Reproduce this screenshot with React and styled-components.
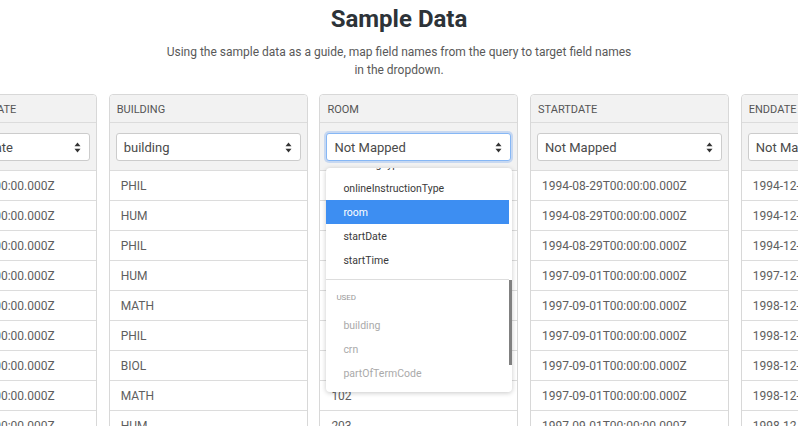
import styled, { createGlobalStyle } from 'styled-components';

const GlobalStyle = createGlobalStyle`
    body {
        margin: 0;
        background: #fff;
        font-family: Roboto, 'Liberation Sans', sans-serif;
        overflow: hidden;
    }
`;

const columns = [
    {
        name: 'OFFERINGSTARTDATE',
        value: 'offeringStartDate',
        rows: [
            '1994-08-29T00:00:00.000Z',
            '1994-08-29T00:00:00.000Z',
            '1994-08-29T00:00:00.000Z',
            '1997-09-01T00:00:00.000Z',
            '1997-09-01T00:00:00.000Z',
            '1997-09-01T00:00:00.000Z',
            '1997-09-01T00:00:00.000Z',
            '1997-09-01T00:00:00.000Z',
            '1997-09-01T00:00:00.000Z',
        ],
    },
    {
        name: 'BUILDING',
        value: 'building',
        rows: ['PHIL', 'HUM', 'PHIL', 'HUM', 'MATH', 'PHIL', 'BIOL', 'MATH', 'HUM'],
    },
    {
        name: 'ROOM',
        value: 'Not Mapped',
        focused: true,
        rows: ['104', '201', '104', '201', '102', '104', '120', '102', '203'],
    },
    {
        name: 'STARTDATE',
        value: 'Not Mapped',
        rows: [
            '1994-08-29T00:00:00.000Z',
            '1994-08-29T00:00:00.000Z',
            '1994-08-29T00:00:00.000Z',
            '1997-09-01T00:00:00.000Z',
            '1997-09-01T00:00:00.000Z',
            '1997-09-01T00:00:00.000Z',
            '1997-09-01T00:00:00.000Z',
            '1997-09-01T00:00:00.000Z',
            '1997-09-01T00:00:00.000Z',
        ],
    },
    {
        name: 'ENDDATE',
        value: 'Not Mapped',
        rows: [
            '1994-12-16T00:00:00.000Z',
            '1994-12-16T00:00:00.000Z',
            '1994-12-16T00:00:00.000Z',
            '1997-12-19T00:00:00.000Z',
            '1998-12-18T00:00:00.000Z',
            '1998-12-18T00:00:00.000Z',
            '1998-12-18T00:00:00.000Z',
            '1998-12-18T00:00:00.000Z',
            '1998-12-18T00:00:00.000Z',
        ],
    },
];

const available = ['endDate', 'endTime', 'meetingType', 'onlineInstructionType', 'room', 'startDate', 'startTime'];
const used = ['building', 'crn', 'partOfTermCode'];

const Arrows = () => (
    <svg width='7' height='11' viewBox='0 0 7 11'>
        <path d='M3.5 0.5 L6.5 4.2 L0.5 4.2 Z' fill='#333' />
        <path d='M3.5 10.5 L6.5 6.8 L0.5 6.8 Z' fill='#333' />
    </svg>
);

const Dropdown = () => (
    <Menu>
        <MenuList>
            {available.map((item) => (
                <MenuItem key={item} active={item === 'room'}>
                    {item}
                </MenuItem>
            ))}
            <Divider />
            <GroupLabel>Used</GroupLabel>
            {used.map((item) => (
                <MenuItem key={item} disabled>
                    {item}
                </MenuItem>
            ))}
        </MenuList>
        <ScrollThumb />
    </Menu>
);

const App = () => {
    return (
        <>
            <GlobalStyle />
            <Page>
                <Title>Sample Data</Title>
                <Subtitle>
                    Using the sample data as a guide, map field names from the query to target field names
                    in the dropdown.
                </Subtitle>
                <ColumnsRow>
                    {columns.map((col) => (
                        <Column key={col.name}>
                            <Header>{col.name}</Header>
                            <SelectCell>
                                <Select focused={col.focused}>
                                    <span>{col.value}</span>
                                    <Arrows />
                                </Select>
                            </SelectCell>
                            {col.rows.map((row, i) => (
                                <Cell key={i}>{row}</Cell>
                            ))}
                            {col.focused && <Dropdown />}
                        </Column>
                    ))}
                </ColumnsRow>
            </Page>
        </>
    );
};

export default App;

const Page = styled.div`
    display: flex;
    flex-direction: column;
    align-items: center;
    width: 100vw;
    height: 100vh;
    overflow: hidden;
    padding-top: 4px;
    box-sizing: border-box;
`;

const Title = styled.h1`
    margin: 0;
    font-size: 24px;
    line-height: 30px;
    font-weight: 700;
    color: #2d3338;
`;

const Subtitle = styled.p`
    margin: 9px 0 0;
    width: 475px;
    font-size: 12px;
    line-height: 18px;
    color: #595959;
    text-align: center;
`;

const ColumnsRow = styled.div`
    display: flex;
    gap: 11.7px;
    align-self: flex-start;
    margin-left: -102px;
    margin-top: 15px;
`;

const Column = styled.div`
    position: relative;
    flex-shrink: 0;
    width: 199px;
    border: 1px solid #d8d8d8;
    border-radius: 4px;
    box-sizing: border-box;
`;

const Header = styled.div`
    height: 28px;
    display: flex;
    align-items: center;
    padding: 1px 7px 0;
    box-sizing: border-box;
    background: #f2f2f2;
    border-bottom: 1px solid #dcdcdc;
    border-radius: 4px 4px 0 0;
    font-size: 11px;
    color: #555;
    white-space: nowrap;
    overflow: hidden;
`;

const SelectCell = styled.div`
    height: 48px;
    padding: 10px 6px;
    box-sizing: border-box;
    background: #f2f2f2;
    border-bottom: 1px solid #dcdcdc;
`;

const Select = styled.div`
    height: 28px;
    display: flex;
    align-items: center;
    justify-content: space-between;
    padding: 0 8px 0 7px;
    box-sizing: border-box;
    background: #fff;
    border: 1px solid ${(p) => (p.focused ? '#86b7f5' : '#ccc')};
    box-shadow: ${(p) => (p.focused ? '0 0 0 2px rgba(120, 170, 240, 0.35)' : 'none')};
    border-radius: 3px;
    font-size: 13px;
    color: #4a4a4a;
    white-space: nowrap;
    overflow: hidden;
`;

const Cell = styled.div`
    height: 30px;
    display: flex;
    align-items: center;
    padding: 0 11px;
    box-sizing: border-box;
    border-bottom: 1px solid #dcdcdc;
    font-size: 12px;
    color: #5e5e5e;
    white-space: nowrap;
    overflow: hidden;
`;

const Menu = styled.div`
    position: absolute;
    top: 73px;
    left: 6px;
    width: 186px;
    height: 224px;
    background: #fff;
    border-radius: 4px;
    box-shadow: 0 1px 5px rgba(0, 0, 0, 0.22);
    overflow: hidden;
`;

const MenuList = styled.div`
    margin-top: -64px;
    margin-right: 3px;
`;

const MenuItem = styled.div`
    height: 24px;
    display: flex;
    align-items: center;
    padding-left: 17px;
    font-size: 10.5px;
    color: ${(p) => (p.active ? '#fff' : p.disabled ? '#aaa' : '#3a3a3a')};
    background: ${(p) => (p.active ? '#3d8ef2' : 'transparent')};
`;

const Divider = styled.div`
    margin-top: 7px;
    border-top: 1px solid #ddd;
`;

const GroupLabel = styled.div`
    padding: 13px 0 10px 10px;
    font-size: 8px;
    line-height: 10px;
    text-transform: uppercase;
    color: #999;
`;

const ScrollThumb = styled.div`
    position: absolute;
    right: 0;
    top: 112px;
    width: 3px;
    height: 85px;
    background: #808080;
`;
